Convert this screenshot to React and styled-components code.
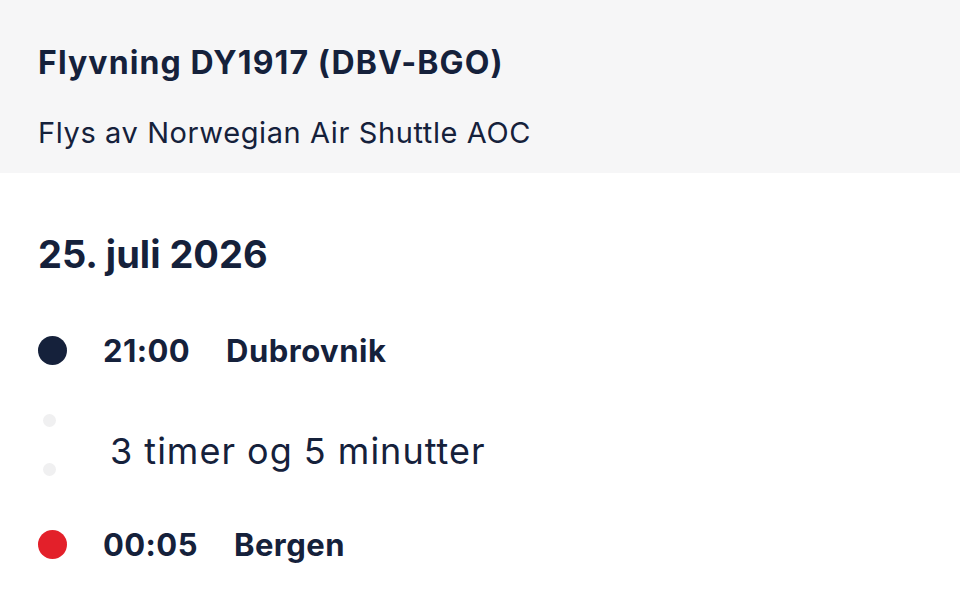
import React from "react";
import styled, { createGlobalStyle } from "styled-components";

const Global = createGlobalStyle`
  html, body { margin: 0; padding: 0; background: #ffffff; }
  body { font-family: Inter, "Noto Sans", sans-serif; color: #15213b; -webkit-font-smoothing: antialiased; }
`;

const Page = styled.div`
  width: 960px;
  height: 598px;
  overflow: hidden;
  background: #fff;
`;

const Header = styled.header`
  background: #f6f6f7;
  padding: 45px 38px 23px;
  display: flex;
  flex-direction: column;
  gap: 35px;
`;

const Title = styled.h1`
  margin: 0;
  font-size: 32px;
  line-height: 36px;
  font-weight: 700;
  letter-spacing: 1.1px;
`;

const Subtitle = styled.p`
  margin: 0;
  font-size: 29px;
  line-height: 34px;
  font-weight: 400;
  letter-spacing: 0.6px;
`;

const Body = styled.main`
  padding: 59px 38px 0;
`;

const DateHeading = styled.h2`
  margin: 0 0 54px;
  font-size: 38px;
  line-height: 44px;
  font-weight: 700;
  letter-spacing: 0;
`;

const Stop = styled.div`
  display: flex;
  align-items: center;
  height: 40px;
`;

const Dot = styled.span`
  width: 29px;
  height: 29px;
  border-radius: 50%;
  background: ${(p) => p.$color};
  flex: none;
  margin-right: 36px;
`;

const Time = styled.span`
  font-size: 31px;
  font-weight: 700;
  letter-spacing: 0.4px;
  margin-right: 36px;
`;

const Place = styled.span`
  font-size: 31px;
  font-weight: 700;
  letter-spacing: 0.5px;
`;

const Leg = styled.div`
  display: flex;
  align-items: center;
  height: 154px;
`;

const Connector = styled.div`
  width: 29px;
  display: flex;
  flex-direction: column;
  align-items: center;
  gap: 36px;
  margin-right: 43px;
  margin-bottom: 4px;
  transform: translateX(-3px);
`;

const FaintDot = styled.span`
  width: 13px;
  height: 13px;
  border-radius: 50%;
  background: #f0f0f1;
`;

const Duration = styled.span`
  font-size: 36px;
  font-weight: 400;
  letter-spacing: 1px;
  padding-top: 8px;
`;

export default function App() {
  return (
    <Page>
      <Global />
      <Header>
        <Title>Flyvning DY1917 (DBV-BGO)</Title>
        <Subtitle>Flys av Norwegian Air Shuttle AOC</Subtitle>
      </Header>
      <Body>
        <DateHeading>25. juli 2026</DateHeading>
        <Stop>
          <Dot $color="#15213b" />
          <Time>21:00</Time>
          <Place>Dubrovnik</Place>
        </Stop>
        <Leg>
          <Connector>
            <FaintDot />
            <FaintDot />
          </Connector>
          <Duration>3 timer og 5 minutter</Duration>
        </Leg>
        <Stop>
          <Dot $color="#e3202a" />
          <Time>00:05</Time>
          <Place>Bergen</Place>
        </Stop>
      </Body>
    </Page>
  );
}
